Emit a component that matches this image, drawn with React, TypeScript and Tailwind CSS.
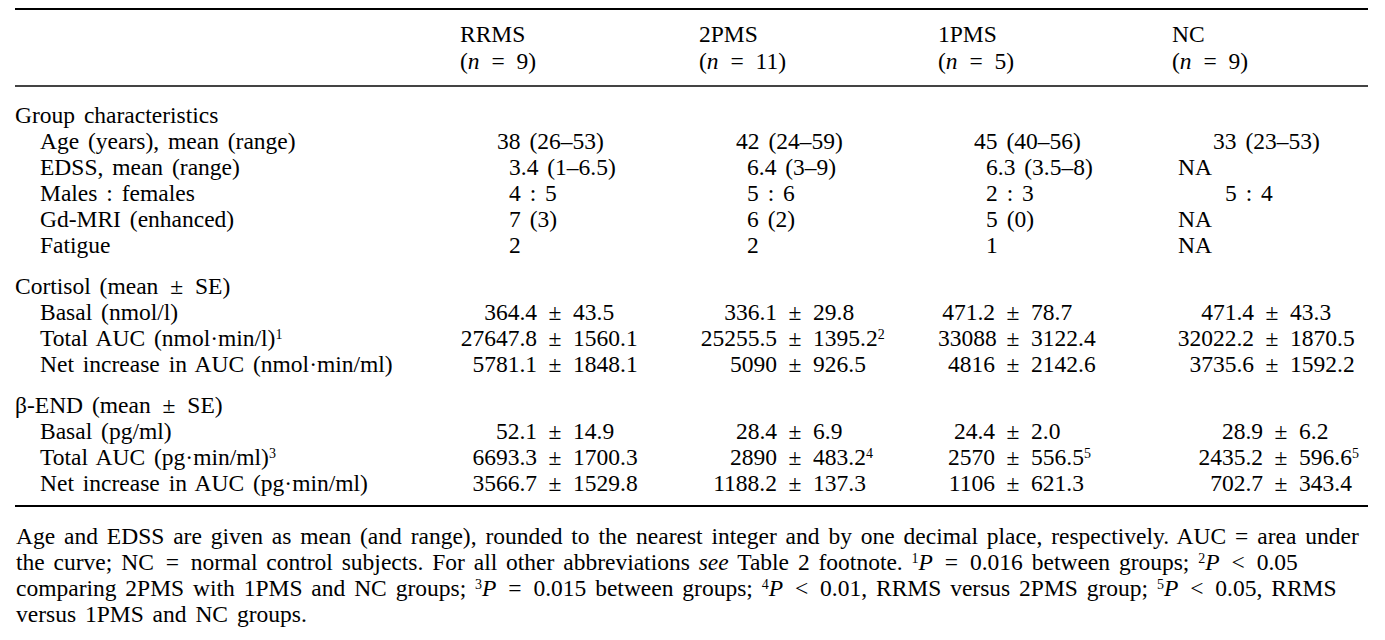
import type { ReactNode } from "react";

type Cell = { text: ReactNode; pad: string };
type PmCell = { left: string; right: ReactNode; w: string };

const groupRows: { label: string; cells: Cell[] }[] = [
  {
    label: "Age (years), mean (range)",
    cells: [
      { text: "38 (26–53)", pad: "pl-[37px]" },
      { text: "42 (24–59)", pad: "pl-[37px]" },
      { text: "45 (40–56)", pad: "pl-[36px]" },
      { text: "33 (23–53)", pad: "pl-[41px]" },
    ],
  },
  {
    label: "EDSS, mean (range)",
    cells: [
      { text: "3.4 (1–6.5)", pad: "pl-[49px]" },
      { text: "6.4 (3–9)", pad: "pl-[48px]" },
      { text: "6.3 (3.5–8)", pad: "pl-[48px]" },
      { text: "NA", pad: "pl-[6px]" },
    ],
  },
  {
    label: "Males : females",
    cells: [
      { text: "4 : 5", pad: "pl-[49px]" },
      { text: "5 : 6", pad: "pl-[48px]" },
      { text: "2 : 3", pad: "pl-[48px]" },
      { text: "5 : 4", pad: "pl-[53px]" },
    ],
  },
  {
    label: "Gd-MRI (enhanced)",
    cells: [
      { text: "7 (3)", pad: "pl-[49px]" },
      { text: "6 (2)", pad: "pl-[48px]" },
      { text: "5 (0)", pad: "pl-[48px]" },
      { text: "NA", pad: "pl-[6px]" },
    ],
  },
  {
    label: "Fatigue",
    cells: [
      { text: "2", pad: "pl-[49px]" },
      { text: "2", pad: "pl-[48px]" },
      { text: "1", pad: "pl-[48px]" },
      { text: "NA", pad: "pl-[6px]" },
    ],
  },
];

const Sup = ({ children }: { children: ReactNode }) => (
  <sup className="text-[14px]">{children}</sup>
);

// math-style relation sign with wider spacing
const Rel = ({ children }: { children: ReactNode }) => (
  <span className="px-[3px]">{children}</span>
);

const cortisolRows: { label: ReactNode; cells: PmCell[] }[] = [
  {
    label: "Basal (nmol/l)",
    cells: [
      { left: "364.4", right: "43.5", w: "w-[77px]" },
      { left: "336.1", right: "29.8", w: "w-[78px]" },
      { left: "471.2", right: "78.7", w: "w-[57px]" },
      { left: "471.4", right: "43.3", w: "w-[82px]" },
    ],
  },
  {
    label: (
      <>
        Total AUC (nmol·min/l)<Sup>1</Sup>
      </>
    ),
    cells: [
      { left: "27647.8", right: "1560.1", w: "w-[77px]" },
      { left: "25255.5", right: <>1395.2<Sup>2</Sup></>, w: "w-[78px]" },
      { left: "33088", right: "3122.4", w: "w-[57px]" },
      { left: "32022.2", right: "1870.5", w: "w-[82px]" },
    ],
  },
  {
    label: "Net increase in AUC (nmol·min/ml)",
    cells: [
      { left: "5781.1", right: "1848.1", w: "w-[77px]" },
      { left: "5090", right: "926.5", w: "w-[78px]" },
      { left: "4816", right: "2142.6", w: "w-[57px]" },
      { left: "3735.6", right: "1592.2", w: "w-[82px]" },
    ],
  },
];

const endRows: { label: ReactNode; cells: PmCell[] }[] = [
  {
    label: "Basal (pg/ml)",
    cells: [
      { left: "52.1", right: "14.9", w: "w-[77px]" },
      { left: "28.4", right: "6.9", w: "w-[78px]" },
      { left: "24.4", right: "2.0", w: "w-[57px]" },
      { left: "28.9", right: "6.2", w: "w-[91px]" },
    ],
  },
  {
    label: (
      <>
        Total AUC (pg·min/ml)<Sup>3</Sup>
      </>
    ),
    cells: [
      { left: "6693.3", right: "1700.3", w: "w-[77px]" },
      { left: "2890", right: <>483.2<Sup>4</Sup></>, w: "w-[78px]" },
      { left: "2570", right: <>556.5<Sup>5</Sup></>, w: "w-[57px]" },
      { left: "2435.2", right: <>596.6<Sup>5</Sup></>, w: "w-[91px]" },
    ],
  },
  {
    label: "Net increase in AUC (pg·min/ml)",
    cells: [
      { left: "3566.7", right: "1529.8", w: "w-[77px]" },
      { left: "1188.2", right: "137.3", w: "w-[78px]" },
      { left: "1106", right: "621.3", w: "w-[57px]" },
      { left: "702.7", right: "343.4", w: "w-[91px]" },
    ],
  },
];

const cols = "grid grid-cols-[445px_239px_239px_234px_196px]";

const PmValue = ({ cell }: { cell: PmCell }) => (
  <div className="flex whitespace-nowrap">
    <span className={`${cell.w} text-right`}>{cell.left}</span>
    <span className="w-[36px] text-center">±</span>
    <span>{cell.right}</span>
  </div>
);

const PmSection = ({ title, rows }: { title: ReactNode; rows: typeof cortisolRows }) => (
  <div>
    <div>{title}</div>
    {rows.map((row, i) => (
      <div key={i} className={cols}>
        <div className="pl-[25px] whitespace-nowrap">{row.label}</div>
        {row.cells.map((c, j) => (
          <PmValue key={j} cell={c} />
        ))}
      </div>
    ))}
  </div>
);

export default function App() {
  return (
    <div className="w-[1385px] h-[640px] bg-white text-black font-['Liberation_Serif',serif] text-[23.5px] leading-[26px] [word-spacing:3px]">
      <div className="ml-[15px] w-[1353px] pt-[8px]">
        <div className="h-[2px] bg-black" />

        {/* Header */}
        <div className={`${cols} pt-[11px] pb-[10px] leading-[27px] border-b-2 border-[#444]`}>
          <div />
          {[
            ["RRMS", "9"],
            ["2PMS", "11"],
            ["1PMS", "5"],
            ["NC", "9"],
          ].map(([name, n]) => (
            <div key={name}>
              <div>{name}</div>
              <div className="whitespace-nowrap">
                (<i>n</i> <Rel>=</Rel> {n})
              </div>
            </div>
          ))}
        </div>

        {/* Body */}
        <div className="pt-[15px] pb-[9px] flex flex-col gap-[15px] border-b-2 border-black">
          <div>
            <div>Group characteristics</div>
            {groupRows.map((row) => (
              <div key={row.label} className={cols}>
                <div className="pl-[25px] whitespace-nowrap">{row.label}</div>
                {row.cells.map((c, j) => (
                  <div key={j} className={`${c.pad} whitespace-nowrap`}>
                    {c.text}
                  </div>
                ))}
              </div>
            ))}
          </div>
          <PmSection title={<>Cortisol (mean <Rel>±</Rel> SE)</>} rows={cortisolRows} />
          <PmSection title={<>β-END (mean <Rel>±</Rel> SE)</>} rows={endRows} />
        </div>

        {/* Footnote */}
        <div className="pt-[16px] pl-[1px] whitespace-nowrap">
          <div>
            Age and EDSS are given as mean (and range), rounded to the nearest integer and by one decimal place, respectively. AUC = area under
          </div>
          <div>
            the curve; NC <Rel>=</Rel> normal control subjects. For all other abbreviations <i>see</i> Table 2 footnote.{" "}
            <Sup>1</Sup>
            <i>P</i> <Rel>=</Rel> 0.016 between groups; <Sup>2</Sup>
            <i>P</i> <Rel>&lt;</Rel> 0.05
          </div>
          <div>
            comparing 2PMS with 1PMS and NC groups; <Sup>3</Sup>
            <i>P</i> <Rel>=</Rel> 0.015 between groups; <Sup>4</Sup>
            <i>P</i> <Rel>&lt;</Rel> 0.01, RRMS versus 2PMS group; <Sup>5</Sup>
            <i>P</i> <Rel>&lt;</Rel> 0.05, RRMS
          </div>
          <div>versus 1PMS and NC groups.</div>
        </div>
      </div>
    </div>
  );
}
